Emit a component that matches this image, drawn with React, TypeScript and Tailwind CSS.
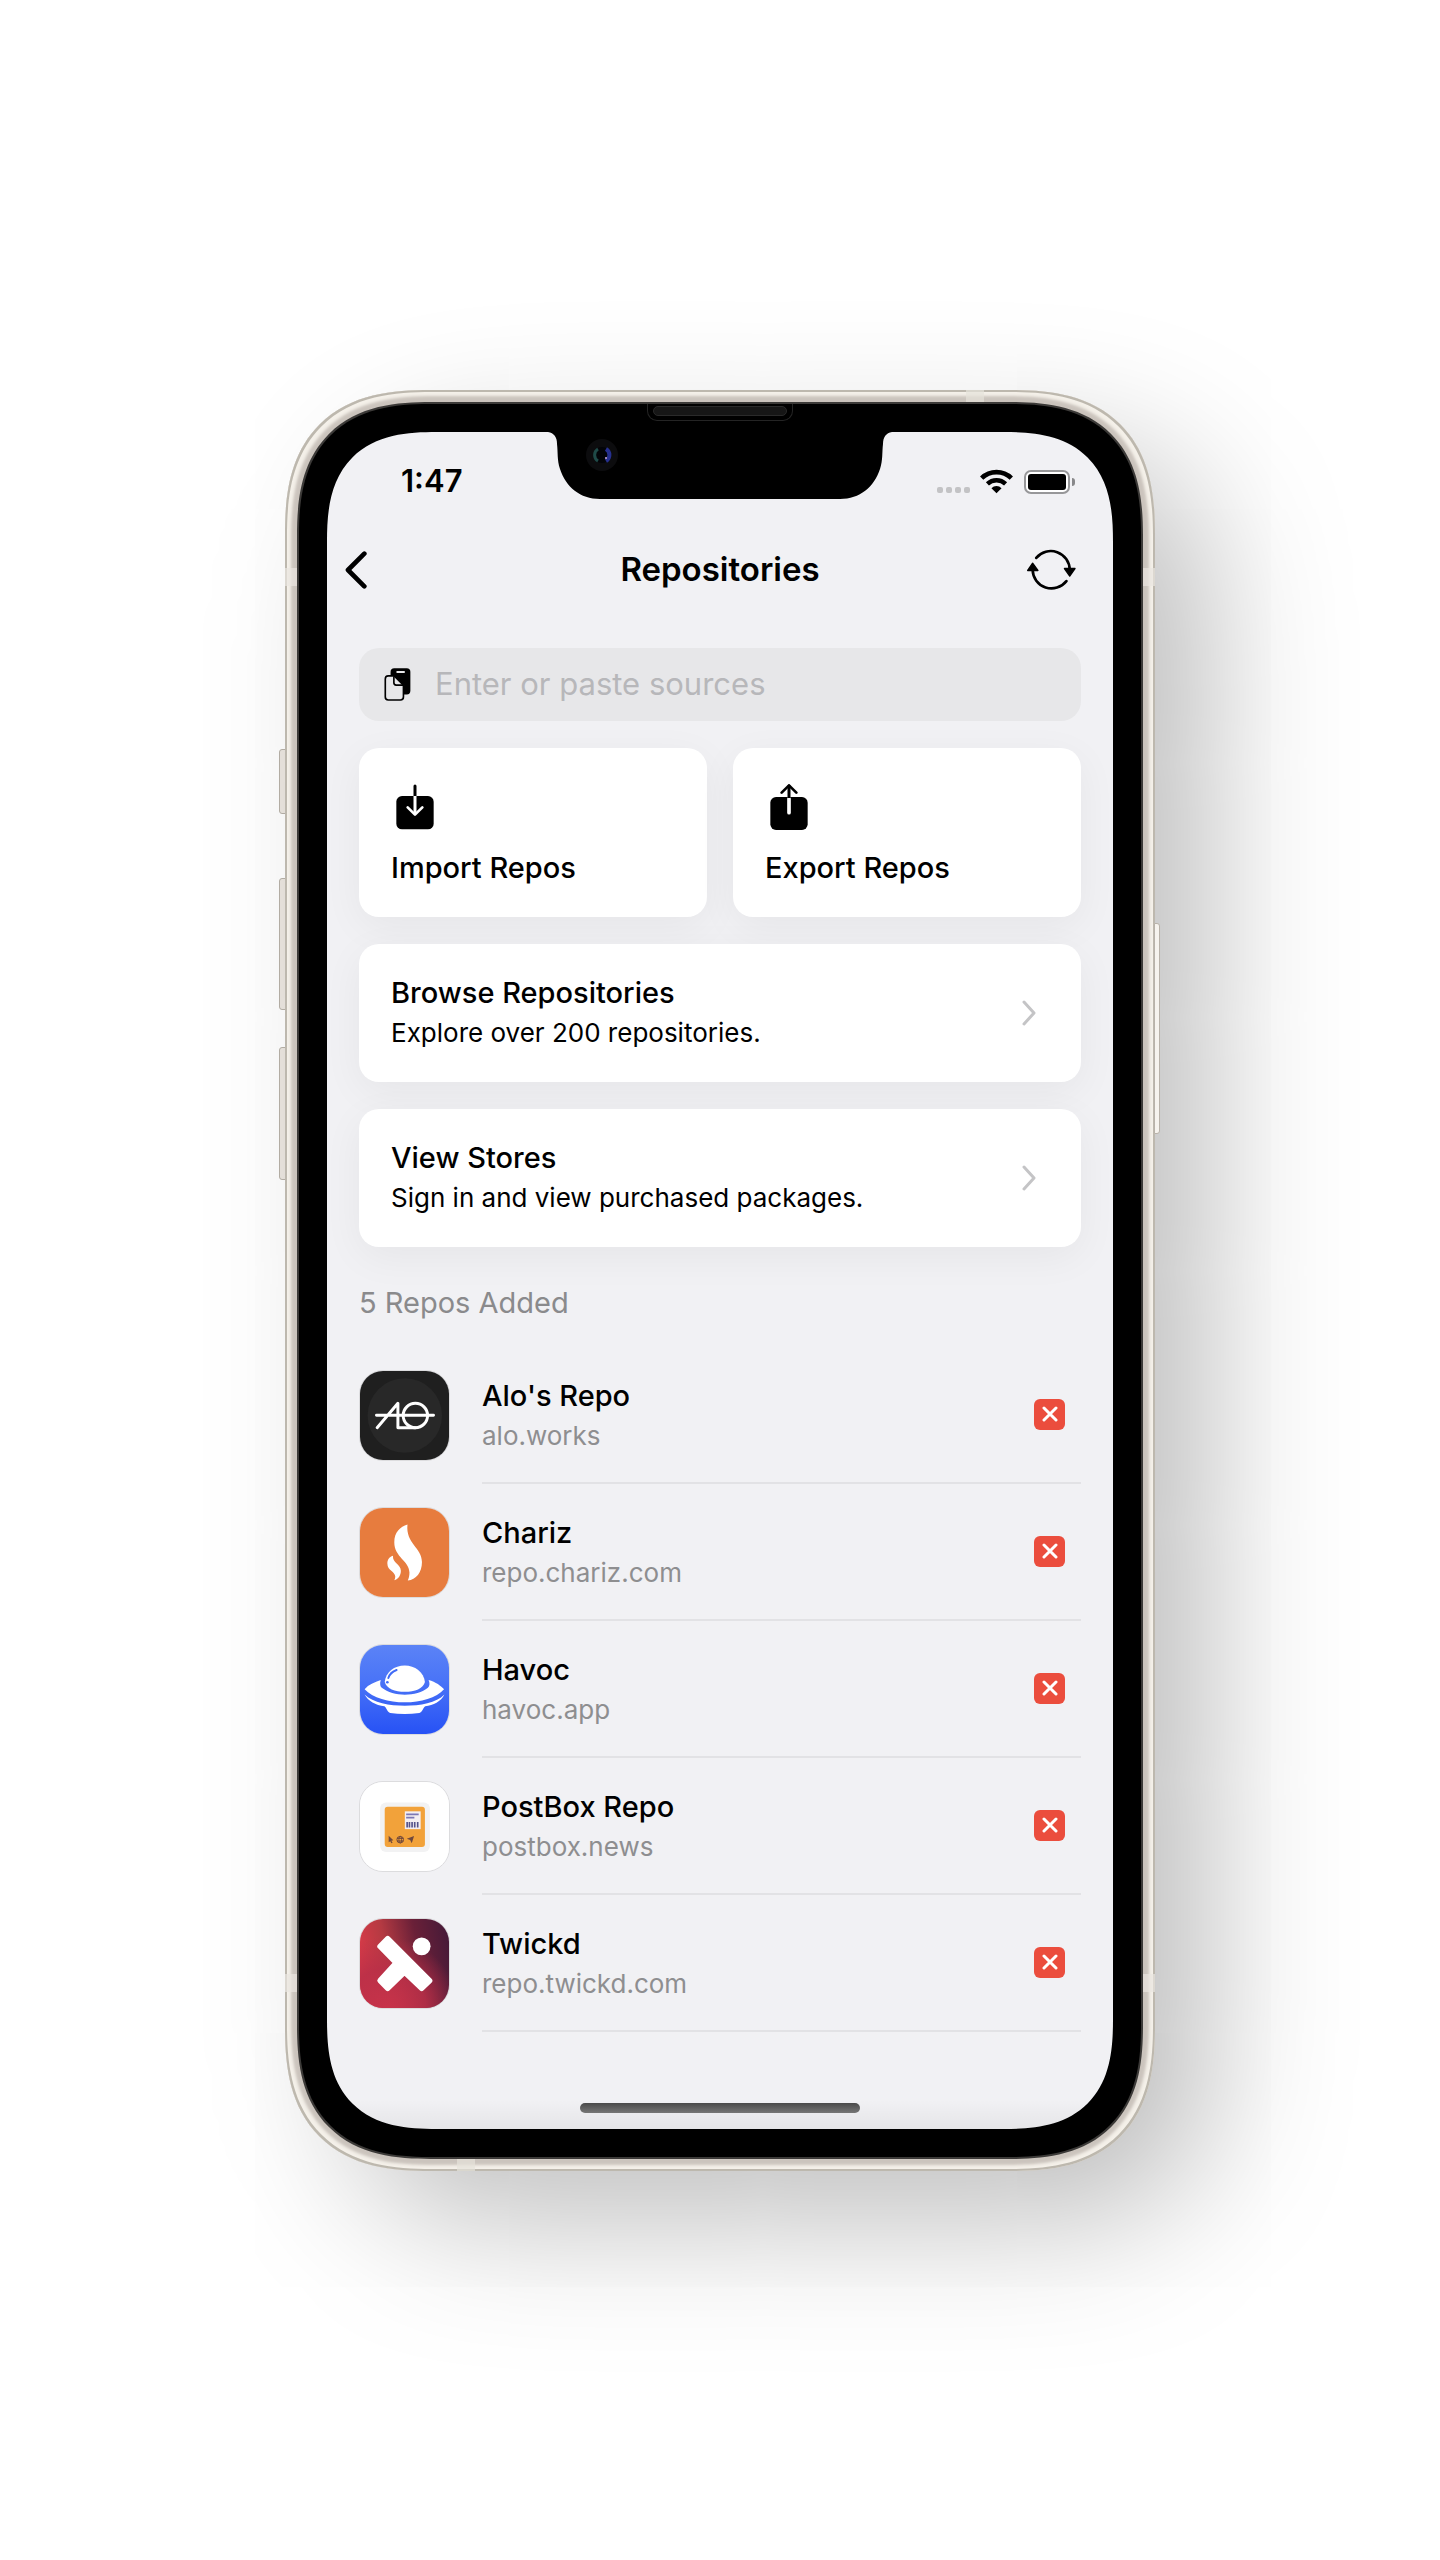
import React from "react";

function BackIcon() {
  return (
    <svg viewBox="0 0 66 114" className="h-[38px] w-[22px]" fill="none" stroke="currentColor" strokeWidth="14" strokeLinecap="round" strokeLinejoin="round" aria-hidden="true">
      <path d="M58 8 L9 57 L58 106" />
    </svg>
  );
}

function RefreshIcon() {
  return (
    <svg viewBox="0 0 148 122" className="h-[41px] w-[49px]" aria-hidden="true">
      <g fill="none" stroke="currentColor" strokeWidth="8" strokeLinecap="round">
        <path d="M28 26 A57 57 0 0 1 129 62" />
        <path d="M119 96 A57 57 0 0 1 17 62" />
      </g>
      <path d="M113 58 H145 L129 81 Z M2 64 L17 42 L33 64 Z" stroke="currentColor" strokeWidth="4" strokeLinejoin="round" />
    </svg>
  );
}

function PasteIcon() {
  return (
    <svg viewBox="0 0 80 100" className="h-[33px] w-[27px] shrink-0" aria-hidden="true">
      <rect x="19" y="1" width="60" height="79" rx="11" />
      <path d="M37 12 H62" stroke="#e7e7e9" strokeWidth="6" />
      <path d="M30 24 H12 Q3 24 3 33 V88 Q3 97 12 97 H49 Q58 97 58 88 V52 Z" fill="#e7e7e9" stroke="#000" strokeWidth="5" strokeLinejoin="round" />
      <path d="M29 25 V45 Q29 52 36 52 H57" fill="none" stroke="#000" strokeWidth="5" />
    </svg>
  );
}

function ImportIcon() {
  return (
    <svg viewBox="0 0 112 138" className="h-[46px] w-[38px]" fill="none" strokeWidth="9" strokeLinecap="round" strokeLinejoin="round" aria-hidden="true">
      <rect y="36" width="112" height="100" rx="17" fill="#000" />
      <path d="M56 6 V35" stroke="#000" />
      <path d="M56 36 V90" stroke="#fff" strokeLinecap="butt" />
      <path d="M34 70 L56 92 L78 70" stroke="#fff" strokeWidth="8" />
    </svg>
  );
}

function ExportIcon() {
  return (
    <svg viewBox="0 0 112 138" className="h-[46px] w-[38px]" fill="none" strokeLinecap="round" strokeLinejoin="round" aria-hidden="true">
      <rect y="39" width="112" height="99" rx="17" fill="#000" />
      <path d="M56 44 V86" stroke="#fff" strokeWidth="11" />
      <path d="M56 4 V42" stroke="#000" strokeWidth="9" strokeLinecap="butt" />
      <path d="M34 26 L56 4 L78 26" stroke="#000" strokeWidth="8" />
    </svg>
  );
}

function ChevronIcon() {
  return (
    <svg viewBox="0 0 14 26" className="h-[26px] w-[14px] shrink-0" fill="none" stroke="#c4c4c6" strokeWidth="3" strokeLinecap="round" strokeLinejoin="round" aria-hidden="true">
      <path d="M2 2 L12 13 L2 24" />
    </svg>
  );
}

function WifiIcon() {
  return (
    <svg viewBox="0 0 98 74" className="h-[25px] w-[33px]" fill="none" stroke="#000" aria-hidden="true">
      <path d="M5 27 A63 63 0 0 1 93 27" strokeWidth="14" />
      <path d="M22 44 A39 39 0 0 1 76 44" strokeWidth="13" />
      <path d="M49 72 L34 57 A21 21 0 0 1 64 57 Z" fill="#000" stroke="none" />
    </svg>
  );
}

function AloLogo() {
  return (
    <svg viewBox="0 0 270 270" className="size-full" aria-hidden="true">
      <rect width="270" height="270" fill="#1f1f1f" />
      <circle cx="136" cy="135" r="113" fill="#282828" />
      <g fill="none" stroke="#fff" strokeWidth="9" strokeLinecap="round" strokeLinejoin="round">
        <path d="M50 134 H223 M52 172 L115 98 V172 H168" />
        <circle cx="168" cy="135" r="37" />
      </g>
    </svg>
  );
}

function CharizLogo() {
  return (
    <svg viewBox="0 0 270 270" className="size-full" aria-hidden="true">
      <rect width="270" height="270" fill="#e77c3e" />
      <g fill="#fff">
        <path d="M144 50 C122 56 104 74 104 104 C104 150 150 160 150 196 C150 206 148 214 145 220 C170 218 188 196 188 164 C188 120 138 108 144 50 Z" />
        <path d="M100 145 C88 148 83 158 83 168 C83 190 107 192 107 208 C107 212 106 216 104 219 C116 216 124 204 124 190 C124 172 98 166 100 145 Z" />
      </g>
    </svg>
  );
}

function HavocLogo() {
  return (
    <svg viewBox="0 0 270 270" className="size-full" aria-hidden="true">
      <defs>
        <linearGradient id="havoc-sky" x1="0" y1="0" x2="0" y2="1">
          <stop offset="0" stopColor="#5b83f6" />
          <stop offset="0.4" stopColor="#4a74f7" />
          <stop offset="1" stopColor="#2752f5" />
        </linearGradient>
      </defs>
      <rect width="270" height="270" fill="url(#havoc-sky)" />
      <g fill="#fff">
        <path d="M75 112 C78 82 104 62 136 62 C166 62 194 82 197 112 C192 132 166 142 136 142 C106 142 80 132 75 112 Z" />
        <path d="M63 106 C59 118 62 126 66 130 C84 144 110 151 136 151 C162 151 190 144 206 130 C212 124 212 114 208 106 C230 112 246 124 255 134 C232 160 184 174 136 174 C88 174 38 160 14 134 C26 120 44 112 63 106 Z" />
        <path d="M14 150 C40 176 90 184 136 184 C182 184 232 176 256 150 C246 172 222 182 198 186 C190 192 190 204 180 206 C150 210 120 210 92 206 C82 204 82 192 74 186 C48 182 24 170 14 150 Z" />
      </g>
      <path d="M86 100 C90 88 100 80 111 76" fill="none" stroke="#416cf6" strokeWidth="6" strokeLinecap="round" />
      <circle cx="83" cy="113" r="4" fill="#416cf6" />
    </svg>
  );
}

function PostBoxLogo() {
  return (
    <svg viewBox="0 0 270 270" className="size-full" aria-hidden="true">
      <rect width="270" height="270" fill="#fff" />
      <rect x="61" y="62" width="151" height="150" rx="18" fill="#f2f2f3" />
      <rect x="75" y="75" width="122" height="122" rx="9" fill="#f2a23a" />
      <rect x="136" y="89" width="48" height="54" fill="#f4eff2" />
      <path d="M140 98 H178 M140 108 H165" stroke="#7d78b4" strokeWidth="5" />
      <path d="M143 121 V138 M150 121 V138 M158 121 V138 M166 121 V138 M175 121 V138" stroke="#55528a" strokeWidth="5" />
      <g fill="#70483c">
        <path d="M87 163 L101 177 L95 178 L99 184 L95 186 L92 180 L87 183 Z" />
        <path d="M142 172 L164 164 L157 186 L152 176 Z" />
      </g>
      <g fill="none" stroke="#70483c" strokeWidth="3">
        <circle cx="122" cy="175" r="10" />
        <ellipse cx="122" cy="175" rx="4" ry="10" />
        <path d="M112 171 H132 M112 179 H132" />
      </g>
    </svg>
  );
}

function TwickdLogo() {
  return (
    <svg viewBox="0 0 270 270" className="size-full" aria-hidden="true">
      <defs>
        <linearGradient id="twickd-base" x1="0" y1="0.45" x2="1" y2="0.25">
          <stop offset="0" stopColor="#d83a48" />
          <stop offset="0.3" stopColor="#b43a42" />
          <stop offset="0.65" stopColor="#6a2038" />
          <stop offset="1" stopColor="#471a38" />
        </linearGradient>
        <radialGradient id="twickd-glow" cx="0.3" cy="1" r="0.8">
          <stop offset="0" stopColor="#c8334a" />
          <stop offset="0.55" stopColor="#b92f48" stopOpacity="0.85" />
          <stop offset="1" stopColor="#b92f48" stopOpacity="0" />
        </radialGradient>
      </defs>
      <rect width="270" height="270" fill="url(#twickd-base)" />
      <rect width="270" height="270" fill="url(#twickd-glow)" />
      <path d="M84 60 L61 83 L110 133 L61 187 L84 210 L135 161 L187 210 L211 187 Z" fill="#fff" stroke="#fff" strokeWidth="17" strokeLinejoin="round" />
      <circle cx="187" cy="83" r="27" fill="#fff" />
    </svg>
  );
}

const repos = [
  { name: "Alo's Repo", host: "alo.works", Logo: AloLogo },
  { name: "Chariz", host: "repo.chariz.com", Logo: CharizLogo },
  { name: "Havoc", host: "havoc.app", Logo: HavocLogo },
  { name: "PostBox Repo", host: "postbox.news", Logo: PostBoxLogo },
  { name: "Twickd", host: "repo.twickd.com", Logo: TwickdLogo },
];

const links = [
  { title: "Browse Repositories", text: "Explore over 200 repositories." },
  { title: "View Stores", text: "Sign in and view purchased packages." },
];

function Notch() {
  return (
    <div className="absolute inset-x-0 top-0 flex justify-center" aria-hidden="true">
      <svg viewBox="0 0 344 68" className="h-[68px] w-[344px]">
        <path d="M0 0 C6 1 9 5 9 12 C10 20 9 28 12 37 C18 55 32 67 52 67 H292 C312 67 326 55 332 37 C335 28 334 20 335 12 C335 5 338 1 344 0 Z" />
        <circle cx="54" cy="23" r="16" fill="#0c0c0e" />
        <circle cx="54" cy="23" r="8" fill="#030408" />
        <path d="M50 17 A7 7 0 0 0 50 29" fill="none" stroke="#1f4a48" strokeWidth="3" />
        <path d="M58 17 A7 7 0 0 1 58 29" fill="none" stroke="#26308f" strokeWidth="4" />
        <circle cx="58" cy="26" r="1" fill="#c8a6d8" />
      </svg>
    </div>
  );
}

function StatusBar() {
  return (
    <div className="flex h-[100px] items-center justify-between pr-[38px] pl-[74px]">
      <span className="text-[31px] font-semibold">1:47</span>
      <div className="flex items-center">
        <div className="mt-4 mr-[10px] flex gap-[3px]">
          <span className="size-[6px] rounded-[2px] bg-[#c3c3c5]" />
          <span className="size-[6px] rounded-[2px] bg-[#c3c3c5]" />
          <span className="size-[6px] rounded-[2px] bg-[#c3c3c5]" />
          <span className="size-[6px] rounded-[2px] bg-[#c3c3c5]" />
        </div>
        <WifiIcon />
        <div className="ml-[11px] h-6 w-[46px] rounded-[7px] border-2 border-[#979799] bg-white p-[2px]">
          <div className="h-full rounded-[3px] bg-black" />
        </div>
        <span className="ml-[2px] h-2 w-[3px] rounded-r-full bg-[#88888a]" />
      </div>
    </div>
  );
}

export default function App() {
  return (
    <div className="flex min-h-screen items-center justify-center overflow-hidden bg-white font-['Inter','Liberation_Sans',sans-serif] text-black">
      <div className="relative w-full max-w-[870px]">
        <span className="absolute top-[359px] -left-[6px] h-[65px] w-2 rounded-l-[3px] border border-[#b8b2a9] bg-[#ece7e0]" />
        <span className="absolute top-[488px] -left-[6px] h-[132px] w-2 rounded-l-[3px] border border-[#b8b2a9] bg-[#ece7e0]" />
        <span className="absolute top-[657px] -left-[6px] h-[133px] w-2 rounded-l-[3px] border border-[#b8b2a9] bg-[#ece7e0]" />

        <div className="relative rounded-[145px] bg-[#cbc4bd] p-3 [corner-shape:superellipse(1.35)] shadow-[inset_0_0_0_2px_#bdb8ae,inset_0_0_3px_6px_#f4f0e9,60px_56px_150px_-12px_rgba(0,0,0,0.28)]">
          <span className="absolute top-[178px] left-0 h-[18px] w-3 bg-[#eae6df]/70" />
          <span className="absolute top-[178px] right-0 h-[18px] w-3 bg-[#eae6df]/70" />
          <span className="absolute bottom-[179px] left-0 h-[18px] w-3 bg-[#eae6df]/70" />
          <span className="absolute right-0 bottom-[179px] h-[18px] w-3 bg-[#eae6df]/70" />
          <span className="absolute top-0 right-[171px] h-3 w-[18px] bg-[#e6e2da]/70" />
          <span className="absolute bottom-0 left-[172px] h-3 w-[18px] bg-[#e6e2da]/70" />
          <span className="absolute top-[533px] -right-[5px] h-[211px] w-[6px] rounded-r-[3px] border border-[#b8b2a9] bg-[#f6f3ee]" />

          <div className="relative rounded-[134px] border-2 border-[#3c3a38] bg-black p-7 [corner-shape:superellipse(1.35)]">
            <div className="absolute inset-x-0 top-0 flex justify-center">
              <div className="h-[17px] w-[146px] rounded-b-[10px] border border-t-0 border-[#242424] px-[5px] pt-[2px]">
                <div className="h-[10px] rounded-full border border-[#2a2a2a] bg-[#161616]" />
              </div>
            </div>

            <main className="relative overflow-hidden rounded-[110px] bg-[#f1f1f4] [corner-shape:superellipse(1.4)]">
              <Notch />
              <StatusBar />

              <header className="flex h-[76px] items-center justify-between pr-[37px] pl-[18px]">
                <button type="button" aria-label="Back" className="flex w-[49px]">
                  <BackIcon />
                </button>
                <h1 className="pl-[19px] text-[33px] font-semibold">Repositories</h1>
                <button type="button" aria-label="Refresh sources">
                  <RefreshIcon />
                </button>
              </header>

              <div className="mt-10 flex flex-col gap-[27px] px-8">
                <label className="flex h-[73px] items-center gap-6 rounded-[20px] bg-[#e7e7e9] px-[25px]">
                  <PasteIcon />
                  <input
                    type="text"
                    aria-label="Sources"
                    placeholder="Enter or paste sources"
                    className="w-full min-w-0 bg-transparent text-[31px] outline-none placeholder:text-[#b7b7ba]"
                  />
                </label>

                <div className="grid grid-cols-2 gap-[26px]">
                  <button type="button" className="flex flex-col rounded-[20px] bg-white px-8 pt-9 pb-[29px] text-left shadow-[0_10px_40px_rgba(0,0,0,0.05)]">
                    <span className="mb-[18px] pl-[5px]"><ImportIcon /></span>
                    <span className="text-[29px] leading-10 font-medium">Import Repos</span>
                  </button>
                  <button type="button" className="flex flex-col rounded-[20px] bg-white px-8 pt-9 pb-[29px] text-left shadow-[0_10px_40px_rgba(0,0,0,0.05)]">
                    <span className="mb-[18px] pl-[5px]"><ExportIcon /></span>
                    <span className="text-[29px] leading-10 font-medium">Export Repos</span>
                  </button>
                </div>

                {links.map((link) => (
                  <a key={link.title} href="#" className="flex h-[138px] items-center justify-between rounded-[20px] bg-white pr-[45px] pl-8 shadow-[0_10px_40px_rgba(0,0,0,0.05)]">
                    <span className="flex flex-col">
                      <span className="text-[29px] leading-10 font-medium">{link.title}</span>
                      <span className="text-[26px] leading-10">{link.text}</span>
                    </span>
                    <ChevronIcon />
                  </a>
                ))}
              </div>

              <h2 className="mt-9 mb-6 px-8 text-[29px] leading-10 text-[#8a8a8c]">5 Repos Added</h2>

              <ul className="px-8">
                {repos.map(({ name, host, Logo }) => (
                  <li key={name} className="flex h-[137px] items-center gap-8">
                    <div className="size-[91px] shrink-0 overflow-hidden rounded-[24px] border border-[#dcdcde]">
                      <Logo />
                    </div>
                    <div className="flex h-full min-w-0 flex-1 items-center justify-between border-b-2 border-[#e2e2e5] pr-4">
                      <div className="pt-1">
                        <p className="text-[29px] leading-10 font-medium">{name}</p>
                        <p className="text-[26px] leading-10 text-[#8e8e90]">{host}</p>
                      </div>
                      <button type="button" aria-label={`Remove ${name}`} className="flex size-[31px] items-center justify-center rounded-[6px] bg-[#eb4d3d]">
                        <svg viewBox="0 0 16 16" className="size-4" fill="none" stroke="#fff" strokeWidth="3" strokeLinecap="round" aria-hidden="true">
                          <path d="M2 2 L14 14 M14 2 L2 14" />
                        </svg>
                      </button>
                    </div>
                  </li>
                ))}
              </ul>

              <div className="flex justify-center bg-linear-to-b from-transparent from-70% to-black/5 pt-[71px] pb-4">
                <div className="h-[10px] w-[280px] rounded-full bg-linear-to-b from-[#4a4a4a] to-[#777]" />
              </div>
            </main>
          </div>
        </div>
      </div>
    </div>
  );
}
